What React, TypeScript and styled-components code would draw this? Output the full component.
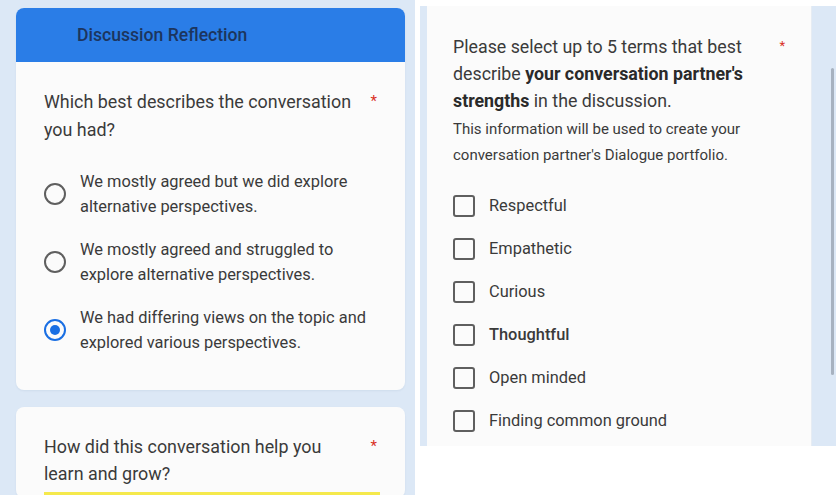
import React from "react";
import styled, { createGlobalStyle } from "styled-components";

const GlobalStyle = createGlobalStyle`
  html, body { margin: 0; padding: 0; background: #ffffff; }
  body { font-family: Roboto, "Noto Sans", Arial, sans-serif; }
  * { box-sizing: border-box; }
`;

const Page = styled.div`
  display: flex;
  width: 836px;
  height: 495px;
  overflow: hidden;
  background: #ffffff;
`;

const LeftPane = styled.div`
  width: 415px;
  height: 495px;
  flex-shrink: 0;
  background: #dce8f6;
  padding: 8px 10px 0 16px;
  display: flex;
  flex-direction: column;
  gap: 17px;
  overflow: hidden;
`;

const Card = styled.div`
  background: #fbfbfb;
  border-radius: 8px;
  overflow: hidden;
  flex-shrink: 0;
  box-shadow: 0 1px 2px rgba(60, 90, 130, 0.08);
`;

const HeaderBar = styled.div`
  height: 54px;
  background: #2a7de7;
  display: flex;
  align-items: center;
  padding-left: 61px;
  font-size: 17.6px;
  font-weight: 500;
  color: #1c355e;
`;

const CardBody = styled.div<{ $top: number; $bottom: number }>`
  padding: ${(p) => p.$top}px 28px ${(p) => p.$bottom}px 28px;
`;

const Question = styled.div<{ $lh: number }>`
  display: flex;
  justify-content: space-between;
  align-items: flex-start;
  font-size: 17.9px;
  line-height: ${(p) => p.$lh}px;
  color: #3a3a3a;
  white-space: nowrap;
`;

const Star = styled.span<{ $size?: number }>`
  color: #d93025;
  font-size: ${(p) => p.$size ?? 15}px;
  line-height: 20px;
  margin-top: 3px;
`;

const Options = styled.div`
  display: flex;
  flex-direction: column;
  gap: 18px;
  margin-top: 25px;
`;

const OptionRow = styled.div`
  display: flex;
  align-items: center;
  gap: 14px;
`;

const Radio = styled.span<{ $checked?: boolean }>`
  width: 22px;
  height: 22px;
  flex-shrink: 0;
  border-radius: 50%;
  border: 2px solid ${(p) => (p.$checked ? "#1a6fe3" : "#5f5f5f")};
  display: flex;
  align-items: center;
  justify-content: center;
  &::after {
    content: "";
    width: 10px;
    height: 10px;
    border-radius: 50%;
    background: #1a6fe3;
    display: ${(p) => (p.$checked ? "block" : "none")};
  }
`;

const OptionText = styled.div`
  font-size: 16.4px;
  line-height: 25px;
  color: #3a3a3a;
  white-space: nowrap;
`;

const Highlight = styled.div`
  margin-top: 5px;
  height: 6px;
  margin-right: -3px;
  background: #f5e94c;
`;

const RightPane = styled.div`
  width: 421px;
  height: 495px;
  flex-shrink: 0;
  padding: 6px 0 0 5px;
  background: #ffffff;
`;

const Frame = styled.div`
  position: relative;
  width: 416px;
  height: 440px;
  background: #dce8f6;
  padding: 0 24px 0 7px;
  overflow: hidden;
`;

const Scrollbar = styled.div`
  position: absolute;
  right: 2px;
  top: 62px;
  width: 3px;
  height: 307px;
  border-radius: 2px;
  background: #a7b2c0;
`;

const RightCard = styled.div`
  background: #fbfbfb;
  height: 100%;
  padding: 27px 26px 0 26px;
  border-right: 1px solid #e6ecf3;
`;

const Prompt = styled.div`
  display: flex;
  justify-content: space-between;
  align-items: flex-start;
`;

const PromptText = styled.div`
  font-size: 17.8px;
  line-height: 27px;
  color: #3a3a3a;
  white-space: nowrap;
  b {
    font-weight: 700;
    color: #2a2a2a;
  }
`;

const Help = styled.div`
  margin-top: 2px;
  font-size: 15px;
  line-height: 26px;
  color: #3a3a3a;
  white-space: nowrap;
`;

const Checks = styled.div`
  margin-top: 16px;
  display: flex;
  flex-direction: column;
`;

const CheckRow = styled.div`
  height: 43px;
  display: flex;
  align-items: center;
  gap: 14px;
`;

const Box = styled.span`
  width: 22px;
  height: 22px;
  flex-shrink: 0;
  border: 2px solid #5f5f5f;
  border-radius: 3px;
`;

const CheckLabel = styled.span<{ $bold?: boolean }>`
  font-size: 16.4px;
  color: #3a3a3a;
  font-weight: ${(p) => (p.$bold ? 500 : 400)};
`;

const options = [
  { text: ["We mostly agreed but we did explore", "alternative perspectives."], checked: false },
  { text: ["We mostly agreed and struggled to", "explore alternative perspectives."], checked: false },
  { text: ["We had differing views on the topic and", "explored various perspectives."], checked: true },
];

const terms = [
  { label: "Respectful" },
  { label: "Empathetic" },
  { label: "Curious" },
  { label: "Thoughtful", bold: true },
  { label: "Open minded" },
  { label: "Finding common ground" },
];

export default function App() {
  return (
    <>
      <GlobalStyle />
      <Page>
        <LeftPane>
          <Card>
            <HeaderBar>Discussion Reflection</HeaderBar>
            <CardBody $top={26} $bottom={35}>
              <Question $lh={28}>
                <div>
                  Which best describes the conversation
                  <br />
                  you had?
                </div>
                <Star>*</Star>
              </Question>
              <Options>
                {options.map((o, i) => (
                  <OptionRow key={i}>
                    <Radio $checked={o.checked} />
                    <OptionText>
                      {o.text[0]}
                      <br />
                      {o.text[1]}
                    </OptionText>
                  </OptionRow>
                ))}
              </Options>
            </CardBody>
          </Card>
          <Card>
            <CardBody $top={26} $bottom={0}>
              <Question $lh={27}>
                <div>
                  How did this conversation help you
                  <br />
                  learn and grow?
                </div>
                <Star>*</Star>
              </Question>
              <Highlight />
            </CardBody>
          </Card>
        </LeftPane>
        <RightPane>
          <Frame>
            <RightCard>
              <Prompt>
                <PromptText>
                  Please select up to 5 terms that best
                  <br />
                  describe <b>your conversation partner's</b>
                  <br />
                  <b>strengths</b> in the discussion.
                </PromptText>
                <Star $size={13}>*</Star>
              </Prompt>
              <Help>
                This information will be used to create your
                <br />
                conversation partner's Dialogue portfolio.
              </Help>
              <Checks>
                {terms.map((t) => (
                  <CheckRow key={t.label}>
                    <Box />
                    <CheckLabel $bold={t.bold}>{t.label}</CheckLabel>
                  </CheckRow>
                ))}
              </Checks>
            </RightCard>
            <Scrollbar />
          </Frame>
        </RightPane>
      </Page>
    </>
  );
}
